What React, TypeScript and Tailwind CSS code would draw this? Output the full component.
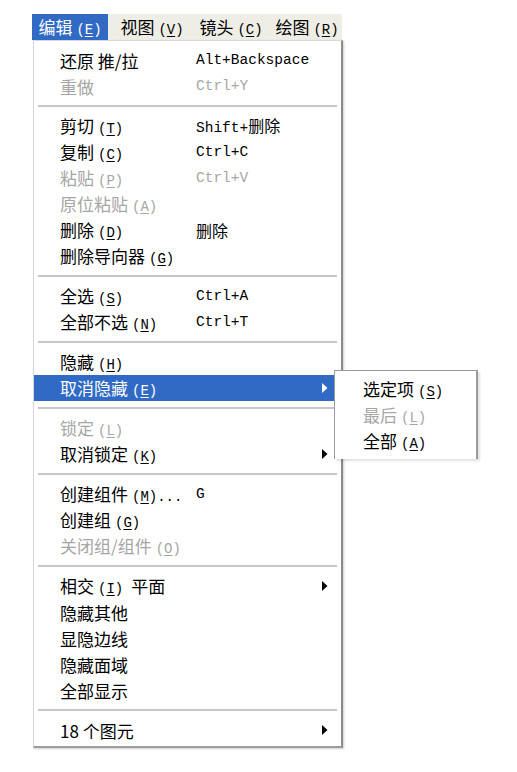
import React from 'react';

type Item = {
  label: string;
  key?: string;
  tail?: string;
  shortcut?: string;
  disabled?: boolean;
  arrow?: boolean;
  active?: boolean;
};

const CJK = "font-['Noto_Sans_CJK_SC','Noto_Sans',sans-serif]";
const MONO = "font-['Liberation_Mono','DejaVu_Sans_Mono',monospace]";

const GROUPS: Item[][] = [
  [
    { label: '还原 推/拉', shortcut: 'Alt+Backspace' },
    { label: '重做', shortcut: 'Ctrl+Y', disabled: true },
  ],
  [
    { label: '剪切', key: 'T', shortcut: 'Shift+删除' },
    { label: '复制', key: 'C', shortcut: 'Ctrl+C' },
    { label: '粘贴', key: 'P', shortcut: 'Ctrl+V', disabled: true },
    { label: '原位粘贴', key: 'A', disabled: true },
    { label: '删除', key: 'D', shortcut: '删除' },
    { label: '删除导向器', key: 'G' },
  ],
  [
    { label: '全选', key: 'S', shortcut: 'Ctrl+A' },
    { label: '全部不选', key: 'N', shortcut: 'Ctrl+T' },
  ],
  [
    { label: '隐藏', key: 'H' },
    { label: '取消隐藏', key: 'E', arrow: true, active: true },
  ],
  [
    { label: '锁定', key: 'L', disabled: true },
    { label: '取消锁定', key: 'K', arrow: true },
  ],
  [
    { label: '创建组件', key: 'M', tail: '...', shortcut: 'G' },
    { label: '创建组', key: 'G' },
    { label: '关闭组/组件', key: 'O', disabled: true },
  ],
  [
    { label: '相交', key: 'I', tail: '平面', arrow: true },
    { label: '隐藏其他' },
    { label: '显隐边线' },
    { label: '隐藏面域' },
    { label: '全部显示' },
  ],
  [{ label: '18 个图元', arrow: true }],
];

const SUB: Item[] = [
  { label: '选定项', key: 'S' },
  { label: '最后', key: 'L', disabled: true },
  { label: '全部', key: 'A' },
];

function Mnemonic({ k }: { k: string }) {
  return (
    <span className={`${MONO} ml-1 text-[14px]`}>
      (<span className="underline underline-offset-2">{k}</span>)
    </span>
  );
}

function Label({ item }: { item: Item }) {
  return (
    <span className="flex items-baseline whitespace-pre">
      <span>{item.label}</span>
      {item.key && <Mnemonic k={item.key} />}
      {item.tail === '...' && <span className={`${MONO} text-[14px]`}>...</span>}
      {item.tail && item.tail !== '...' && <span className="ml-2">{item.tail}</span>}
    </span>
  );
}

function Arrow({ white }: { white?: boolean }) {
  return (
    <svg width="6" height="10" viewBox="0 0 6 10" className="ml-auto">
      <path d="M0 0 L5.5 5 L0 10 Z" fill={white ? '#ffffff' : '#000000'} />
    </svg>
  );
}

function Shortcut({ text }: { text: string }) {
  // latin parts in mono, CJK parts in the menu font
  const parts = text.split(/([\u4e00-\u9fff]+)/).filter(Boolean);
  return (
    <span className="flex items-baseline">
      {parts.map((p, i) =>
        /[\u4e00-\u9fff]/.test(p) ? (
          <span key={i} className="text-[16px]">{p}</span>
        ) : (
          <span key={i} className={`${MONO} text-[14.5px]`}>{p}</span>
        )
      )}
    </span>
  );
}

function Submenu() {
  return (
    <div className="absolute left-[300px] top-[-5px] z-10 w-[144px] border-l border-t border-r-2 border-[#9a9a9a] border-b-0 bg-white pt-[5px] pb-[5px] shadow-[2px_2px_2px_rgba(0,0,0,0.12)]">
      {SUB.map((s) => (
        <div
          key={s.label}
          className={`flex h-[26px] items-center pl-[28px] ${s.disabled ? 'text-[#a6a6a6]' : 'text-black'}`}
        >
          <Label item={s} />
        </div>
      ))}
    </div>
  );
}

function Row({ item }: { item: Item }) {
  const color = item.active ? 'text-white' : item.disabled ? 'text-[#a6a6a6]' : 'text-black';
  return (
    <div className={`relative flex h-[26px] items-center ${item.active ? 'bg-[#316ac5]' : ''}`}>
      <div className={`flex w-full items-center pl-[26px] pr-[13px] ${color}`}>
        <span className="w-[136px] shrink-0">
          <Label item={item} />
        </span>
        {item.shortcut && <Shortcut text={item.shortcut} />}
        {item.arrow && <Arrow white={item.active} />}
      </div>
      {item.active && <Submenu />}
    </div>
  );
}

export default function App() {
  return (
    <div className={`min-h-screen bg-white pl-[32px] pt-[14px] ${CJK} text-[17px] leading-none`}>
      {/* menu bar */}
      <div className="flex h-[26px] w-[310px] items-center bg-[#efeee6] text-black">
        <div className="flex h-full w-[76px] items-center justify-center bg-[#316ac5] text-white">
          <Label item={{ label: '编辑', key: 'E' }} />
        </div>
        <div className="ml-[6px] flex h-full w-[76px] items-center justify-center">
          <Label item={{ label: '视图', key: 'V' }} />
        </div>
        <div className="ml-[2px] flex h-full w-[78px] items-center justify-center">
          <Label item={{ label: '镜头', key: 'C' }} />
        </div>
        <div className="ml-[2px] flex h-full w-[70px] items-center justify-center">
          <Label item={{ label: '绘图', key: 'R' }} />
        </div>
      </div>

      {/* dropdown */}
      <div className="ml-px w-[310px] border-t border-l border-[#d8d8d8] border-r-2 border-r-[#8c8c8c] border-b-2 border-b-[#9c9c9c] bg-white pt-[6px] pb-[3px] shadow-[1px_1px_2px_rgba(0,0,0,0.2)]">
        {GROUPS.map((group, gi) => (
          <div key={gi}>
            {gi > 0 && (
              <div className="flex h-[14px] items-center px-[4px]">
                <div className="h-[2px] w-full bg-[#c6c6c6]" />
              </div>
            )}
            {group.map((item) => (
              <Row key={item.label} item={item} />
            ))}
          </div>
        ))}
      </div>
    </div>
  );
}
